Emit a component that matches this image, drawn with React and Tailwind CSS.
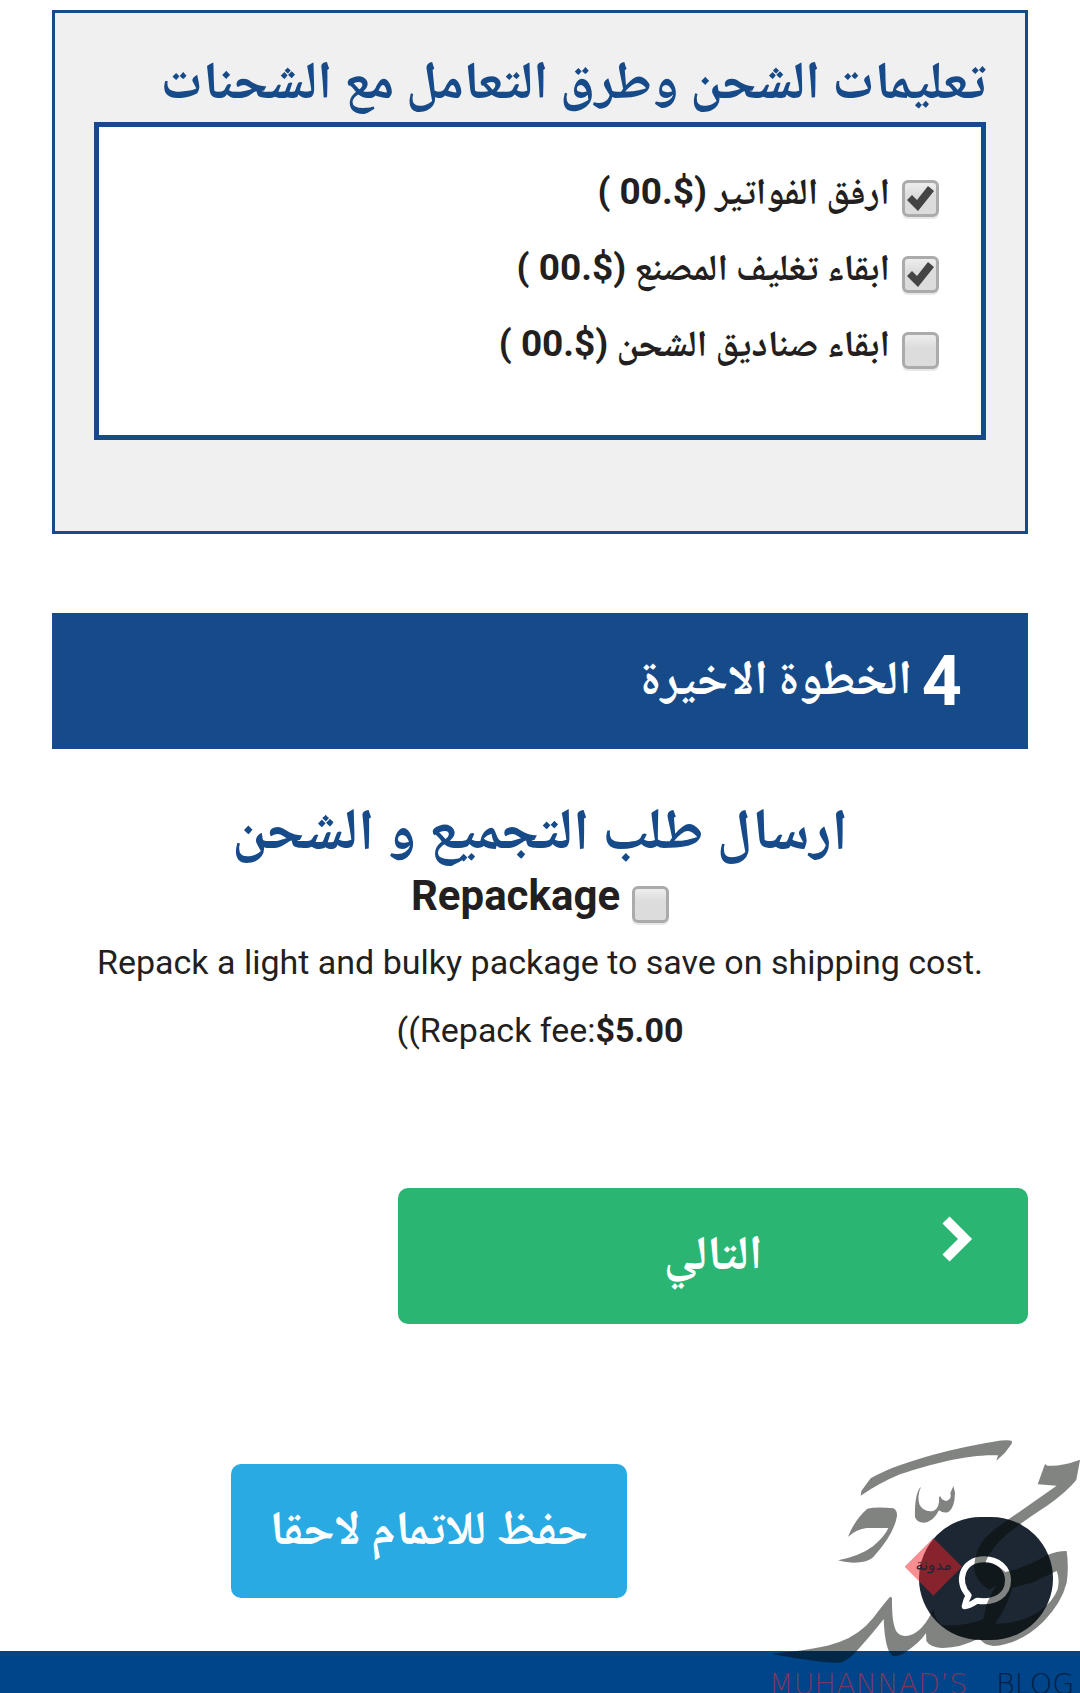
import { useState } from "react";

const OPTIONS = [
    ["invoices", "ارفق الفواتير", true],
    ["factory", "ابقاء تغليف المصنع", true],
    ["boxes", "ابقاء صناديق الشحن", false],
];

const arabicClass = "font-['Noto_Naskh_Arabic','DejaVu_Sans',serif] font-bold";

function Checkbox({ id, checked, onChange }) {
    return (
        <span className="relative block h-[37px] w-[37px] shrink-0">
            <input
                id={id}
                type="checkbox"
                checked={checked}
                onChange={e => onChange(e.target.checked)}
                className="peer block h-full w-full appearance-none rounded-md border-[3px] border-[#ababab] bg-linear-to-b from-[#eeeeee] to-[#dcdcdc] to-40% shadow-[0_2px_0_#e8e8e8]"
            />
            <svg viewBox="0 0 37 37" className="pointer-events-none absolute inset-0 hidden peer-checked:block" aria-hidden="true">
                <path d="M5 20 10 15 15 20 26 6 32 11 16 31Z" fill="#444" />
            </svg>
        </span>
    );
}

function ShippingOptions({ value, onChange }) {
    return (
        <section className="border-[3px] border-[#164a88] bg-[#f0f0f0] px-[39px] pt-[38px] pb-[91px]">
            <h2 className={`${arabicClass} text-[53px] leading-[71px] text-[#164a88]`}>
                تعليمات الشحن وطرق التعامل مع الشحنات
            </h2>
            <div className="border-[5px] border-[#164a88] bg-white pt-[33px] pr-[42px] pb-[47px]">
                {OPTIONS.map(([id, label]) => (
                    <div key={id} className="flex h-[76px] items-center gap-3">
                        <Checkbox id={id} checked={value[id]} onChange={v => onChange(id, v)} />
                        <label htmlFor={id} className="pb-2 text-[37px] leading-[48px] font-bold text-[#231f20]">
                            <span className={arabicClass}>{label} </span>
                            ($.00 )
                        </label>
                    </div>
                ))}
            </div>
        </section>
    );
}

function ChatButton() {
    return (
        <button type="button" aria-label="Chat" className="absolute right-[27px] bottom-[54px] h-[123px] w-[134px] rounded-full bg-[#1c2733]">
            <svg viewBox="476 287 402 369" className="h-full w-full" aria-hidden="true">
                <path
                    d="M625 522C585 480 606 414 672 414C714 414 743 441 743 477C743 521 706 546 650 538Q630 553 613 555Q617 535 625 522Z"
                    fill="none"
                    stroke="#fff"
                    strokeWidth="18"
                    strokeLinejoin="round"
                />
            </svg>
        </button>
    );
}

function BlogLogo() {
    return (
        <svg viewBox="0 0 960 819" className="pointer-events-none absolute right-0 bottom-0 w-[320px]" direction="ltr" aria-label="مدونة محمد">
            <g fill="#060a06" opacity="0.5" fillRule="evenodd">
                <path d="M302 224 304 210 332 172C400 130 560 85 700 62Q745 55 756 60L755 68 735 95 709 119 714 103C640 98 520 125 420 160Q360 185 302 224Z" />
                <path d="M482 198Q463 220 465 288Q470 305 492 305Q520 303 537 268Q553 279 566 272Q584 260 585 215L580 195 571 216Q577 232 560 240Q545 239 541 226L537 228Q540 262 520 270Q490 275 478 250Q471 225 482 200Z" />
                <path d="M264 347Q285 295 322 263Q350 257 400 262Q412 268 411 285Q402 340 340 408Q325 425 280 425Q250 423 234 418Q300 405 340 375Q375 345 385 321L320 321Q290 325 264 347Z" />
                <path d="M855 129 862 134Q905 137 958 117L960 117 949 176Q925 208 860 255Q790 300 740 340Q690 385 676 425Q710 427 736 453L765 446Q820 428 860 403Q890 390 920 390Q927 440 920 485Q905 545 850 602Q780 670 700 675Q670 672 658 652Q600 682 545 681Q510 678 499 660L498 636Q480 665 430 698Q415 706 400 705Q375 695 371 594Q340 635 290 690Q260 722 240 725Q180 726 35 698Q180 685 240 662Q300 640 340 590Q370 550 390 527L396 530Q395 610 410 632Q425 650 450 643Q490 630 520 565Q525 600 545 612Q610 618 670 595Q672 585 680 550Q690 520 710 492L688 506Q645 480 642 440Q645 390 672 355Q700 325 760 285L890 194 833 190ZM757 500 820 484Q855 465 890 450Q900 470 893 505Q880 540 840 570Q780 610 705 608Q740 560 757 500Z" />
            </g>
            <path d="M520 351 606 437 520 524 434 437Z" fill="#f01f26" opacity="0.5" />
            <text x="521" y="446" textAnchor="middle" fill="#1b2733" className="font-['DejaVu_Sans',sans-serif] text-[46px]">
                مدونة
            </text>
            <g className="font-['DejaVu_Sans',sans-serif] text-[86px] font-extralight">
                <text x="26" y="819" fill="#773862">MUHANNAD’S</text>
                <text x="708" y="819" fill="#002042">BLOG</text>
            </g>
        </svg>
    );
}

export default function App() {
    const [options, setOptions] = useState(Object.fromEntries(OPTIONS.map(([id, , on]) => [id, on])));
    const [repack, setRepack] = useState(false);

    return (
        <div dir="rtl" className="relative overflow-hidden bg-white font-[Roboto,sans-serif] text-[#231f20]">
            <main className="px-[52px] pt-[10px] pb-[53px]">
                <ShippingOptions value={options} onChange={(id, v) => setOptions({ ...options, [id]: v })} />

                <h2 className="mt-[79px] flex h-[136px] items-center gap-2.5 bg-[#164a88] px-[66px] text-white">
                    <span className="text-[70px] font-bold">4</span>
                    <span className={`${arabicClass} pt-1.5 text-[48px]`}>الخطوة الاخيرة</span>
                </h2>

                <section className="mt-12 text-center">
                    <h2 className={`${arabicClass} text-[58px] leading-[80px] text-[#164a88]`}>
                        ارسال طلب التجميع و الشحن
                    </h2>
                    <div className="mt-[3px] flex h-12 items-center justify-center gap-3">
                        <Checkbox id="repack" checked={repack} onChange={setRepack} />
                        <label htmlFor="repack" className="pb-4 text-[42px] leading-[48px] font-bold">Repackage</label>
                    </div>
                    <p dir="ltr" className="text-[34px] leading-[68px]">
                        Repack a light and bulky package to save on shipping cost.
                    </p>
                    <p dir="ltr" className="text-[34px] leading-[68px]">
                        ((Repack fee:<b>$5.00</b>
                    </p>
                </section>

                <button type="button" className="relative mt-[124px] block h-[136px] w-[630px] max-w-full rounded-[10px] bg-[#2ab573] pt-1.5 text-white">
                    <span className={`${arabicClass} text-[48px]`}>التالي</span>
                    <svg viewBox="0 0 32 46" className="absolute top-7 right-[54px] w-8" fill="none" stroke="#fff" strokeWidth="10" aria-hidden="true">
                        <path d="M4 4 23 23 4 42" />
                    </svg>
                </button>

                <div className="mt-[140px] flex justify-end pl-[179px]">
                    <button type="button" className={`${arabicClass} h-[134px] w-[396px] rounded-[10px] bg-[#2aaae2] pt-1.5 text-[48px] text-white`}>
                        حفظ للاتمام لاحقا
                    </button>
                </div>
            </main>
            <footer className="h-[43px] bg-[#00458a]" />
            <ChatButton />
            <BlogLogo />
        </div>
    );
}
